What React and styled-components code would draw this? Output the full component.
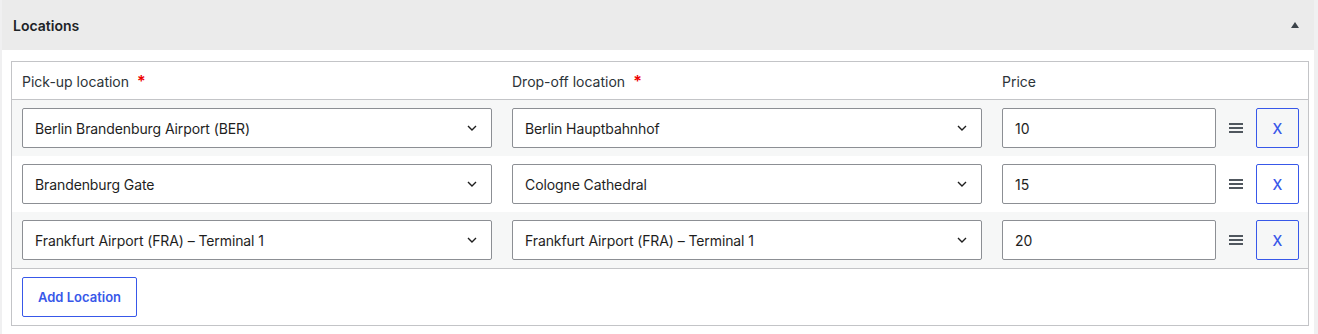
import React from 'react';
import styled, { createGlobalStyle } from 'styled-components';

const GlobalStyle = createGlobalStyle`
  body {
    margin: 0;
    background: #f0f0f1;
    font-family: Inter, "Noto Sans", "Liberation Sans", sans-serif;
    color: #1e1e1e;
  }
`;

const Panel = styled.section`
  margin-left: 2px;
  margin-right: 4px;
  background: #fff;
  height: 334px;
`;

const PanelHeader = styled.div`
  height: 50px;
  background: #ebebeb;
  display: flex;
  align-items: center;
  justify-content: space-between;
  padding: 0 15px 0 11px;
`;

const Title = styled.h2`
  margin: 0;
  font-size: 14px;
  font-weight: 600;
  color: #1d2327;
`;

const Toggle = styled.span`
  width: 0;
  height: 0;
  border-left: 4px solid transparent;
  border-right: 4px solid transparent;
  border-bottom: 6px solid #3c434a;
`;

const Body = styled.div`
  padding: 11px 5px 0 9px;
`;

const Table = styled.div`
  border: 1px solid #c3c4c7;
`;

const Row = styled.div`
  display: flex;
  align-items: center;
  padding: 0 9px 0 10px;
  height: ${p => (p.$head ? '38px' : p.$last ? '57px' : '56px')};
  box-sizing: border-box;
  background: ${p => (p.$alt ? '#f6f7f7' : '#fff')};
  border-bottom: ${p => (p.$head || p.$last ? '1px solid #c3c4c7' : 'none')};
`;

const Cell = styled.div`
  flex: 1;
  min-width: 0;
  padding-right: 20px;
`;

const PriceCell = styled.div`
  width: 214px;
  flex: none;
`;

const Actions = styled.div`
  width: 83px;
  flex: none;
  display: flex;
  align-items: center;
  justify-content: flex-end;
  gap: 13px;
`;

const Label = styled.span`
  font-size: 14px;
  color: #2c3338;
`;

const Required = styled.span`
  color: #e00;
  margin-left: 8px;
  font-weight: 600;
`;

const SelectBox = styled.div`
  height: 40px;
  box-sizing: border-box;
  border: 1px solid #8c8f94;
  border-radius: 2px;
  background: #fff;
  display: flex;
  align-items: center;
  justify-content: space-between;
  padding: 0 14px 0 12px;
  font-size: 14px;
  letter-spacing: -0.1px;
  color: #1e1e1e;
`;

const PriceInput = styled.input`
  width: 100%;
  height: 40px;
  box-sizing: border-box;
  border: 1px solid #8c8f94;
  border-radius: 2px;
  padding: 0 12px;
  font: inherit;
  font-size: 14px;
  color: #1e1e1e;
  background: #fff;
`;

const Handle = styled.span`
  width: 14px;
  height: 10px;
  display: flex;
  flex-direction: column;
  justify-content: space-between;
  & > i {
    display: block;
    height: 2px;
    background: #50575e;
  }
`;

const OutlineButton = styled.button`
  height: 40px;
  box-sizing: border-box;
  border: 1px solid #3858e9;
  border-radius: 2px;
  background: transparent;
  color: #3858e9;
  font-family: inherit;
  font-size: ${p => (p.$small ? '14px' : '13px')};
  font-weight: ${p => (p.$small ? 500 : 600)};
  padding: ${p => (p.$small ? '0' : '0 15px')};
  width: ${p => (p.$small ? '43px' : 'auto')};
  cursor: pointer;
`;

const Footer = styled.div`
  padding: 8px 10px;
`;

const Chevron = () => (
  <svg width="10" height="6" viewBox="0 0 10 6" fill="none">
    <path d="M1 1l4 4 4-4" stroke="#1e1e1e" strokeWidth="1.4" />
  </svg>
);

const rows = [
  { from: 'Berlin Brandenburg Airport (BER)', to: 'Berlin Hauptbahnhof', price: '10' },
  { from: 'Brandenburg Gate', to: 'Cologne Cathedral', price: '15' },
  { from: 'Frankfurt Airport (FRA) – Terminal 1', to: 'Frankfurt Airport (FRA) – Terminal 1', price: '20' },
];

export default function App() {
  return (
    <>
      <GlobalStyle />
      <Panel>
        <PanelHeader>
          <Title>Locations</Title>
          <Toggle />
        </PanelHeader>
        <Body>
          <Table>
            <Row $head>
              <Cell><Label>Pick-up location</Label><Required>*</Required></Cell>
              <Cell><Label>Drop-off location</Label><Required>*</Required></Cell>
              <PriceCell><Label>Price</Label></PriceCell>
              <Actions />
            </Row>
            {rows.map((r, i) => (
              <Row key={i} $alt={i % 2 === 0} $last={i === rows.length - 1}>
                <Cell><SelectBox>{r.from}<Chevron /></SelectBox></Cell>
                <Cell><SelectBox>{r.to}<Chevron /></SelectBox></Cell>
                <PriceCell><PriceInput defaultValue={r.price} /></PriceCell>
                <Actions>
                  <Handle><i /><i /><i /></Handle>
                  <OutlineButton $small>X</OutlineButton>
                </Actions>
              </Row>
            ))}
            <Footer>
              <OutlineButton>Add Location</OutlineButton>
            </Footer>
          </Table>
        </Body>
      </Panel>
    </>
  );
}
